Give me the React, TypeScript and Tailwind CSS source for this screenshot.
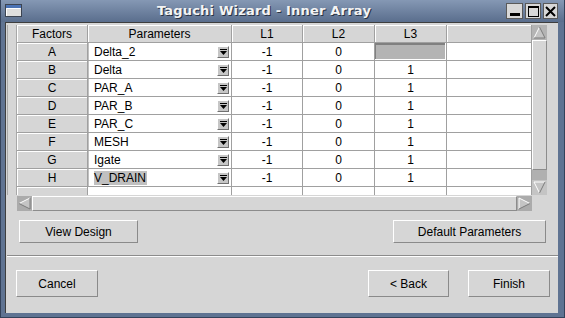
import React from "react";

const rows: [string, string][] = [
  ["A", "Delta_2"],
  ["B", "Delta"],
  ["C", "PAR_A"],
  ["D", "PAR_B"],
  ["E", "PAR_C"],
  ["F", "MESH"],
  ["G", "Igate"],
  ["H", "V_DRAIN"],
];

const gray =
  "h-full flex items-center justify-center bg-[#d6d6d6] border-r border-b border-[#a0a0a0] shadow-[inset_1px_1px_0_#ffffff]";
const white =
  "h-full flex items-center justify-center bg-white border-r border-b border-[#a0a0a0]";

function DownTri() {
  return (
    <svg width="9" height="8" viewBox="0 0 9 8">
      <rect x="1" y="1" width="7" height="1" fill="#000" />
      <polygon points="1,3 8,3 4.5,7" fill="#000" />
    </svg>
  );
}

function ArrowBox({ dir, bg }: { dir: "up" | "down" | "left" | "right"; bg: string }) {
  let tri = "";
  let light = "";
  let dark = "";
  if (dir === "up") {
    tri = "7.5,2 13,13 2,13";
    light = "M2 13 L7.5 2";
    dark = "M7.5 2 L13 13 L2 13";
  } else if (dir === "down") {
    tri = "2,2 13,2 7.5,13";
    light = "M2 2 L13 2 M2 2 L7.5 13";
    dark = "M13 2 L7.5 13";
  } else if (dir === "left") {
    tri = "2,7.5 13,2 13,13";
    light = "M2 7.5 L13 2";
    dark = "M13 2 L13 13 L2 7.5";
  } else {
    tri = "2,2 13,7.5 2,13";
    light = "M2 13 L2 2 L13 7.5";
    dark = "M13 7.5 L2 13";
  }
  return (
    <svg width="15" height="15" viewBox="0 0 15 15" className="block shrink-0">
      <rect x="0" y="0" width="15" height="15" fill={bg} />
      <polygon points={tri} fill="#c4c4c4" />
      <path d={light} stroke="#ffffff" strokeWidth="1" fill="none" />
      <path d={dark} stroke="#7c7c7c" strokeWidth="1" fill="none" />
    </svg>
  );
}

function Btn({ label, w }: { label: string; w: string }) {
  return (
    <div
      className={`${w} h-full flex items-center justify-center bg-[#d6d6d6] border border-t-white border-l-white border-r-[#8a8a8a] border-b-[#8a8a8a] text-[12px] text-black`}
    >
      {label}
    </div>
  );
}

function Row({ f, p, i }: { f: string; p: string; i: number }) {
  return (
    <div className="flex h-[18px]">
      <div className={`w-[71px] ${gray}`}>{f}</div>
      <div className="w-[144px] h-full flex items-center bg-white border-r border-b border-[#a0a0a0]">
        <div className="flex-1 h-full flex items-center pl-[5px] border-l border-[#c0c0c0]">
          {i === 7 ? <span className="bg-[#c0c0c0] pr-[1px] leading-[14px]">{p}</span> : <span>{p}</span>}
        </div>
        <div className="w-[12px] h-[12px] mr-[2px] ml-[1px] flex items-center justify-center bg-[#c6c6c6] border border-t-white border-l-white border-r-[#707070] border-b-[#707070]">
          <DownTri />
        </div>
      </div>
      <div className={`w-[71px] ${white}`}>-1</div>
      <div className={`w-[72px] ${white}`}>0</div>
      {i === 0 ? (
        <div className="w-[72px] h-full bg-white border-r border-b border-[#a0a0a0] pr-[1px] pb-[1px]">
          <div className="h-full bg-[#b4b4b4] border-t-2 border-l border-[#808080]" />
        </div>
      ) : (
        <div className={`w-[72px] ${white}`}>1</div>
      )}
      <div className={`w-[85px] ${white}`} />
    </div>
  );
}

export default function App() {
  return (
    <div className="w-[565px] h-[318px] flex flex-col bg-[#5f7392] border-l border-r border-b border-[#34425a] overflow-hidden font-['Liberation_Sans',Arial,sans-serif] text-[12px] text-black">
      {/* Title bar */}
      <div className="h-[22px] shrink-0 flex items-center bg-linear-to-b from-[#8598b4] to-[#5a6e8d] pl-[4px] pr-[6px]">
        <svg width="17" height="13" viewBox="0 0 17 13" className="block mt-[-2px]">
          <rect x="0.5" y="0.5" width="16" height="12" fill="#dedede" stroke="#3c4452" />
          <rect x="1" y="1" width="15" height="3" fill="#4b73b5" />
          <path d="M1.5 12 L1.5 4.5 L15.5 4.5" stroke="#ffffff" fill="none" />
        </svg>
        <div className="flex-1 text-center font-['DejaVu_Sans',sans-serif] font-bold text-[13px] text-[#f4f4f4] [text-shadow:1px_1px_0_#2a3445] tracking-[0.2px]">
          Taguchi Wizard - Inner Array
        </div>
        <div className="flex gap-[2px] items-center">
          <div className="w-[17px] h-[16px] bg-[#d8d8d8] border border-[#5a5a5a] flex items-end justify-center pb-[2px]">
            <div className="w-[10px] h-[3px] bg-black" />
          </div>
          <div className="w-[16px] h-[16px] bg-[#d8d8d8] border border-[#5a5a5a] flex items-center justify-center">
            <div className="w-[11px] h-[11px] border border-t-2 border-black" />
          </div>
          <div className="w-[15px] h-[16px] bg-[#d8d8d8] border border-[#5a5a5a] flex items-center justify-center">
            <svg width="11" height="11" viewBox="0 0 11 11">
              <path d="M1 1 L10 10 M10 1 L1 10" stroke="#000" strokeWidth="2" />
            </svg>
          </div>
        </div>
      </div>

      {/* Frame body */}
      <div className="flex-1 flex pl-[4px] pr-[6px] pb-[4px]">
        <div className="flex-1 flex flex-col bg-[#d6d6d6] border-t border-l border-[#3e3e3e]">
          {/* Table block */}
          <div className="flex mt-[2px] ml-[1px]">
            <div className="flex flex-col">
              <div className="flex">
                <div className="w-[10px] h-[170px] border-l border-r border-[#a8a8a8]" />
                <div className="flex flex-col">
                  <div className="flex h-[18px]">
                    <div className={`w-[71px] ${gray}`}>Factors</div>
                    <div className={`w-[144px] ${gray}`}>Parameters</div>
                    <div className={`w-[71px] ${gray}`}>L1</div>
                    <div className={`w-[72px] ${gray}`}>L2</div>
                    <div className={`w-[72px] ${gray}`}>L3</div>
                    <div className={`w-[85px] ${gray}`} />
                  </div>
                  {rows.map(([f, p], i) => (
                    <Row key={f} f={f} p={p} i={i} />
                  ))}
                  <div className="flex h-[8px]">
                    <div className="w-[71px] h-full bg-[#d6d6d6] border-r border-[#a0a0a0] shadow-[inset_1px_1px_0_#ffffff]" />
                    <div className="w-[144px] h-full bg-white border-r border-[#a0a0a0]" />
                    <div className="w-[71px] h-full bg-white border-r border-[#a0a0a0]" />
                    <div className="w-[72px] h-full bg-white border-r border-[#a0a0a0]" />
                    <div className="w-[72px] h-full bg-white border-r border-[#a0a0a0]" />
                    <div className="w-[85px] h-full bg-white border-r border-[#a0a0a0]" />
                  </div>
                </div>
              </div>
              {/* horizontal scrollbar */}
              <div className="ml-[10px] mt-[1px] w-[515px] h-[15px] flex bg-[#c4c4c4]">
                <ArrowBox dir="left" bg="#ababab" />
                <div className="flex-1 h-full bg-[#d6d6d6] border border-t-white border-l-white border-r-[#8c8c8c] border-b-[#8c8c8c]" />
                <ArrowBox dir="right" bg="#ababab" />
              </div>
            </div>
            {/* vertical scrollbar */}
            <div className="w-[15px] h-[170px] flex flex-col bg-[#b0b0b0]">
              <ArrowBox dir="up" bg="#b4b4b4" />
              <div className="h-[130px] bg-[#d6d6d6] border border-t-white border-l-white border-r-[#8c8c8c] border-b-[#8c8c8c]" />
              <div className="flex-1" />
              <ArrowBox dir="down" bg="#c4c4c4" />
            </div>
          </div>

          {/* Middle buttons */}
          <div className="flex justify-between h-[23px] mt-[9px] ml-[13px] mr-[12px]">
            <Btn label="View Design" w="w-[119px]" />
            <Btn label="Default Parameters" w="w-[153px]" />
          </div>

          {/* Separator */}
          <div className="mt-[12px] ml-[1px] h-[2px] border-t border-b border-t-[#8c8c8c] border-b-white" />

          {/* Bottom buttons */}
          <div className="flex h-[27px] mt-[13px] ml-[10px] mr-[8px]">
            <Btn label="Cancel" w="w-[82px]" />
            <div className="flex-1" />
            <Btn label="< Back" w="w-[81px]" />
            <div className="w-[19px]" />
            <Btn label="Finish" w="w-[82px]" />
          </div>
        </div>
      </div>
    </div>
  );
}
